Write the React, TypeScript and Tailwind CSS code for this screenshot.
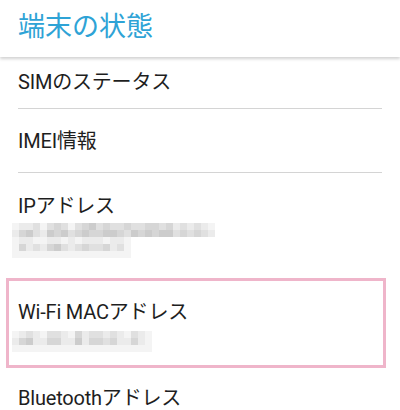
import React from 'react'

const FONT = { fontFamily: 'Roboto, "Noto Sans CJK JP", sans-serif' }

// mosaic shades (light → dark)
const SHADE = [
  'bg-[#f4f4f4]',
  'bg-[#ebebeb]',
  'bg-[#e0e0e0]',
  'bg-[#d6d6d6]',
  'bg-[#cccccc]',
  'bg-[#c2c2c2]',
]

const Mosaic = ({ cells }: { cells: number[] }) => (
  <div className="flex h-[7px]">
    {cells.map((c, i) => (
      <div key={i} className={`w-[7px] h-[7px] ${SHADE[c]}`} />
    ))}
  </div>
)

const IP_ROWS = [
  [0, 1, 1, 2, 0, 2, 3, 2, 0, 2, 3, 4, 2, 3, 2, 2, 3, 2, 2, 3, 3, 2, 3, 1, 2, 1, 2, 1, 0],
  [1, 3, 4, 2, 1, 4, 3, 4, 2, 3, 4, 3, 3, 4, 4, 3, 2, 4, 3, 4, 3, 4, 4, 2, 3, 2, 3, 2, 1],
  [0, 1, 1, 0, 0, 1, 1, 0, 1, 0, 1, 1, 1, 0, 1, 1, 0],
  [0, 3, 1, 2, 1, 3, 4, 2, 1, 2, 3, 2, 2, 3, 1, 2, 0],
  [0, 0, 0, 0, 0, 0, 0, 0, 0, 0, 0, 0, 0, 0, 0, 0, 0],
]

const MAC_ROWS = [
  [0, 1, 2, 1, 0, 2, 2, 1, 0, 3, 1, 2, 2, 1, 2, 1, 0, 2, 1, 0],
  [1, 3, 4, 1, 1, 3, 3, 1, 1, 4, 1, 3, 3, 2, 3, 1, 1, 3, 1, 0],
  [0, 0, 0, 0, 0, 0, 0, 0, 0, 0, 0, 0, 0, 0, 0, 0, 0, 0, 0, 0],
]

const Divider = () => <div className="mx-[18px] h-px bg-[#d4d4d4]" />

export default function App() {
  return (
    <div className="w-[400px] h-[410px] overflow-hidden bg-white relative" style={FONT}>
      {/* header */}
      <div className="h-[57px] flex items-center pl-[18px] bg-white relative z-10 shadow-[0_2px_3px_rgba(0,0,0,0.18)]">
        <span className="text-[27px] leading-none text-[#2ea3d6] -mt-[2px]">端末の状態</span>
      </div>

      {/* list */}
      <div className="flex flex-col">
        <div className="h-[52px] flex items-center pl-[18px] -mt-[1px]">
          <span className="text-[20px] text-[#1e1e1e] tracking-[-0.2px]">SIMのステータス</span>
        </div>
        <Divider />
        <div className="h-[63px] flex items-center pl-[18px] pt-[1px]">
          <span className="text-[20px] text-[#1e1e1e] tracking-[-0.2px]">IMEI情報</span>
        </div>
        <Divider />
        <div className="h-[102px] flex flex-col pl-[18px] pt-[19px]">
          <span className="text-[20px] leading-[28px] text-[#1e1e1e] tracking-[-0.2px]">IPアドレス</span>
          <div className="mt-[3px] -ml-[6px] flex flex-col blur-[0.6px]">
            {IP_ROWS.map((r, i) => (
              <Mosaic key={i} cells={r} />
            ))}
          </div>
        </div>
        <div className="h-[96px] flex flex-col pl-[18px] pt-[23px]">
          <span className="text-[20px] leading-[28px] text-[#1e1e1e] tracking-[-0.2px]">Wi-Fi MACアドレス</span>
          <div className="mt-[5px] -ml-[6px] flex flex-col blur-[0.6px]">
            {MAC_ROWS.map((r, i) => (
              <Mosaic key={i} cells={r} />
            ))}
          </div>
        </div>
        <div className="flex pl-[18px] pt-[13px]">
          <span className="text-[20px] leading-[28px] text-[#1e1e1e] tracking-[-0.2px]">Bluetoothアドレス</span>
        </div>
      </div>

      {/* highlight annotation */}
      <div className="absolute left-[6px] top-[278px] w-[380px] h-[90px] border-[3px] border-[#efb5ca] pointer-events-none" />
    </div>
  )
}
